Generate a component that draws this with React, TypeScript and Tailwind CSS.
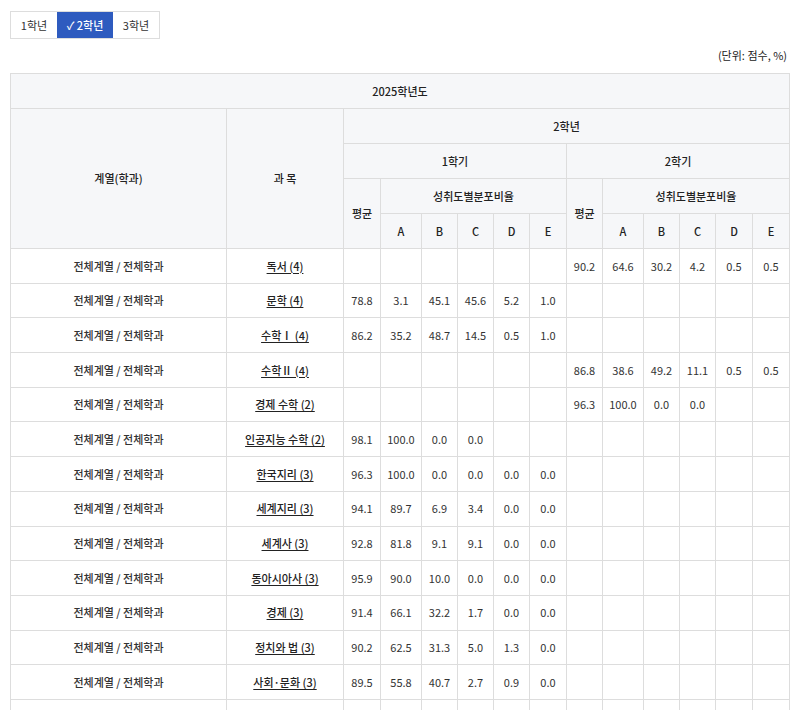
import React from 'react';

type Row = { subject: string; s1: string[]; s2: string[] };

const rows: Row[] = [
    { subject: '독서 (4)', s1: [], s2: ['90.2', '64.6', '30.2', '4.2', '0.5', '0.5'] },
    { subject: '문학 (4)', s1: ['78.8', '3.1', '45.1', '45.6', '5.2', '1.0'], s2: [] },
    { subject: '수학Ⅰ (4)', s1: ['86.2', '35.2', '48.7', '14.5', '0.5', '1.0'], s2: [] },
    { subject: '수학Ⅱ (4)', s1: [], s2: ['86.8', '38.6', '49.2', '11.1', '0.5', '0.5'] },
    { subject: '경제 수학 (2)', s1: [], s2: ['96.3', '100.0', '0.0', '0.0'] },
    { subject: '인공지능 수학 (2)', s1: ['98.1', '100.0', '0.0', '0.0'], s2: [] },
    { subject: '한국지리 (3)', s1: ['96.3', '100.0', '0.0', '0.0', '0.0', '0.0'], s2: [] },
    { subject: '세계지리 (3)', s1: ['94.1', '89.7', '6.9', '3.4', '0.0', '0.0'], s2: [] },
    { subject: '세계사 (3)', s1: ['92.8', '81.8', '9.1', '9.1', '0.0', '0.0'], s2: [] },
    { subject: '동아시아사 (3)', s1: ['95.9', '90.0', '10.0', '0.0', '0.0', '0.0'], s2: [] },
    { subject: '경제 (3)', s1: ['91.4', '66.1', '32.2', '1.7', '0.0', '0.0'], s2: [] },
    { subject: '정치와 법 (3)', s1: ['90.2', '62.5', '31.3', '5.0', '1.3', '0.0'], s2: [] },
    { subject: '사회·문화 (3)', s1: ['89.5', '55.8', '40.7', '2.7', '0.9', '0.0'], s2: [] },
    { subject: '생활과 윤리 (3)', s1: [], s2: [] },
];

const widths = [216, 117, 37, 41, 36, 36, 36, 37, 36, 41, 36, 36, 37, 37];
const th = 'border border-[#dddddd] bg-[#f6f7f9] font-medium text-[#222] h-[35px] p-0';
const td = 'border border-[#dddddd] h-[34.7px] p-0 text-[#333]';
const grades = ['A', 'B', 'C', 'D', 'E'];

const App: React.FC = () => {
    return (
        <div className="px-[10px] pt-[11px] text-[11px] text-[#222]" style={{ fontFamily: '"Noto Sans CJK KR", "Noto Sans", sans-serif' }}>
            <div className="flex w-fit border border-[#dddddd] h-[28px]">
                <button className="w-[46px] text-[11px] text-[#333]">1학년</button>
                <button className="w-[56px] text-[11px] text-white bg-[#2e5bbf] font-medium">✓ 2학년</button>
                <button className="w-[46px] text-[11px] text-[#333]">3학년</button>
            </div>
            <div className="text-right text-[11px] mt-[9px] mb-[10px] h-[15px] leading-[15px] pr-[1px]">(단위: 점수, %)</div>
            <table className="table-fixed border-collapse w-[779px] text-center">
                <colgroup>
                    {widths.map((w, i) => <col key={i} style={{ width: w }} />)}
                </colgroup>
                <thead>
                    <tr><th colSpan={14} className={th}>2025학년도</th></tr>
                    <tr>
                        <th rowSpan={4} className={th}>계열(학과)</th>
                        <th rowSpan={4} className={th}>과 목</th>
                        <th colSpan={12} className={th}>2학년</th>
                    </tr>
                    <tr>
                        <th colSpan={6} className={th}>1학기</th>
                        <th colSpan={6} className={th}>2학기</th>
                    </tr>
                    <tr>
                        <th rowSpan={2} className={th}>평균</th>
                        <th colSpan={5} className={th}>성취도별분포비율</th>
                        <th rowSpan={2} className={th}>평균</th>
                        <th colSpan={5} className={th}>성취도별분포비율</th>
                    </tr>
                    <tr>
                        {grades.map(g => <th key={'a' + g} className={th}>{g}</th>)}
                        {grades.map(g => <th key={'b' + g} className={th}>{g}</th>)}
                    </tr>
                </thead>
                <tbody>
                    {rows.map(r => (
                        <tr key={r.subject}>
                            <td className={td + ' font-medium text-[#222]'}>전체계열 / 전체학과</td>
                            <td className={td}><span className="underline underline-offset-2 font-medium text-[#222]">{r.subject}</span></td>
                            {Array.from({ length: 6 }).map((_, i) => <td key={'x' + i} className={td}>{r.s1[i] ?? ''}</td>)}
                            {Array.from({ length: 6 }).map((_, i) => <td key={'y' + i} className={td}>{r.s2[i] ?? ''}</td>)}
                        </tr>
                    ))}
                </tbody>
            </table>
        </div>
    );
};

export default App;
